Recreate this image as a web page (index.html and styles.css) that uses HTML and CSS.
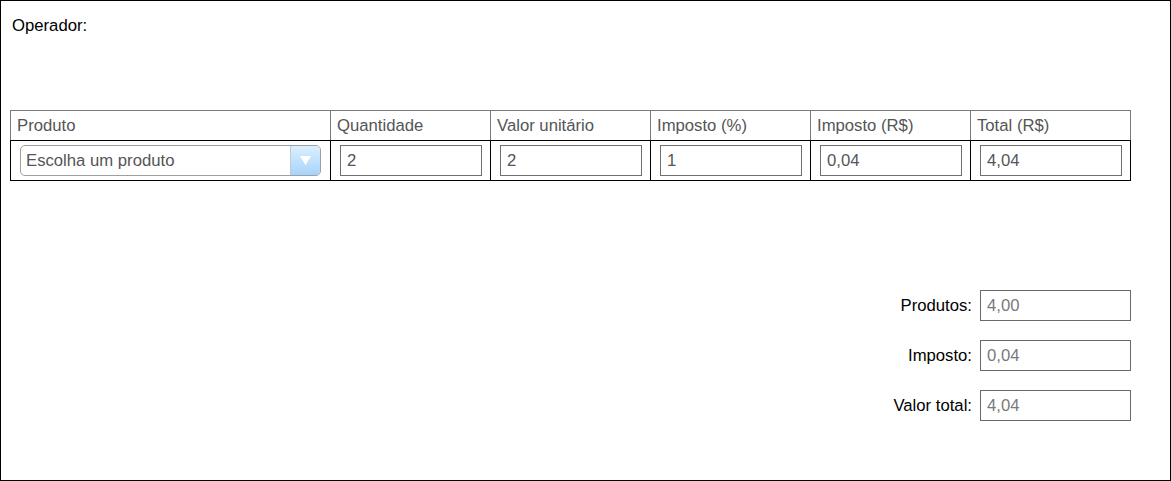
FILE: index.html
```html
<!DOCTYPE html>
<html lang="pt">
<head>
<meta charset="utf-8">
<title>Pedido</title>
<link rel="stylesheet" href="styles.css">
</head>
<body>
<div class="page">
  <div class="operador">Operador:</div>

  <div class="items">
    <div class="row head">
      <div class="cell">Produto</div>
      <div class="cell">Quantidade</div>
      <div class="cell">Valor unitário</div>
      <div class="cell">Imposto (%)</div>
      <div class="cell">Imposto (R$)</div>
      <div class="cell">Total (R$)</div>
    </div>
    <div class="row body">
      <div class="cell">
        <div class="select">
          <span class="select-text">Escolha um produto</span>
          <span class="select-btn">
            <svg width="11" height="9" viewBox="0 0 11 9"><path d="M0 0 H11 L5.5 9 Z" fill="#ffffff"/></svg>
          </span>
        </div>
      </div>
      <div class="cell"><input class="field" type="text" value="2"></div>
      <div class="cell"><input class="field" type="text" value="2"></div>
      <div class="cell"><input class="field" type="text" value="1"></div>
      <div class="cell"><input class="field" type="text" value="0,04"></div>
      <div class="cell"><input class="field" type="text" value="4,04"></div>
    </div>
  </div>

  <div class="summary">
    <div class="sum-row">
      <span class="sum-label">Produtos:</span>
      <input class="sum-field" type="text" value="4,00" readonly>
    </div>
    <div class="sum-row">
      <span class="sum-label">Imposto:</span>
      <input class="sum-field" type="text" value="0,04" readonly>
    </div>
    <div class="sum-row">
      <span class="sum-label">Valor total:</span>
      <input class="sum-field" type="text" value="4,04" readonly>
    </div>
  </div>
</div>
</body>
</html>
```

FILE: styles.css
```css
* {
  box-sizing: border-box;
}

html, body {
  margin: 0;
  padding: 0;
  background: #ffffff;
}

body {
  font-family: "Liberation Sans", Arial, Helvetica, sans-serif;
  font-size: 16.7px;
  color: #000000;
}

.page {
  width: 1171px;
  height: 481px;
  border: 1px solid #000000;
  padding: 15px 9px 0 9px;
}

.operador {
  padding-left: 2px;
  line-height: 19px;
  height: 19px;
}

.items {
  margin-top: 75px;
  width: 1121px;
}

.row {
  display: grid;
  grid-template-columns: 320px repeat(5, 160px);
}

.head {
  height: 30px;
  border-right: 1px solid #7a7a7a;
}

.head .cell {
  border-top: 1px solid #7a7a7a;
  border-left: 1px solid #7a7a7a;
  padding: 5px 0 0 6px;
  line-height: 19px;
  color: #555555;
}

.body {
  height: 41px;
  border: 1px solid #000000;
  border-left: none;
}

.body .cell {
  border-left: 1px solid #000000;
  padding: 4px 0 0 9px;
}

.field {
  display: block;
  width: 142px;
  height: 31px;
  margin: 0;
  border: 1px solid #707070;
  border-radius: 0;
  padding: 0 6px;
  font-family: inherit;
  font-size: 16.7px;
  color: #555555;
  background: #ffffff;
  outline: none;
}

.select {
  display: flex;
  align-items: stretch;
  width: 301px;
  height: 31px;
  border: 1px solid #a0a0a0;
  border-radius: 5px;
  overflow: hidden;
  background: #ffffff;
}

.select-text {
  flex: 1;
  padding-left: 5px;
  line-height: 29px;
  color: #555555;
}

.select-btn {
  width: 30px;
  display: flex;
  align-items: center;
  justify-content: center;
  border-left: 1px solid #b9cddd;
  background: linear-gradient(#dcefff, #a6d4fb);
}

.summary {
  width: 1121px;
  margin-top: 109px;
  display: flex;
  flex-direction: column;
  align-items: flex-end;
  gap: 19px;
}

.sum-row {
  display: flex;
  align-items: center;
  gap: 8px;
}

.sum-label {
  line-height: 19px;
}

.sum-field {
  display: block;
  width: 151px;
  height: 31px;
  margin: 0;
  border: 1px solid #6a6a6a;
  border-radius: 0;
  padding: 0 6px;
  font-family: inherit;
  font-size: 16.7px;
  color: #7a7a7a;
  background: #ffffff;
  outline: none;
}
```
